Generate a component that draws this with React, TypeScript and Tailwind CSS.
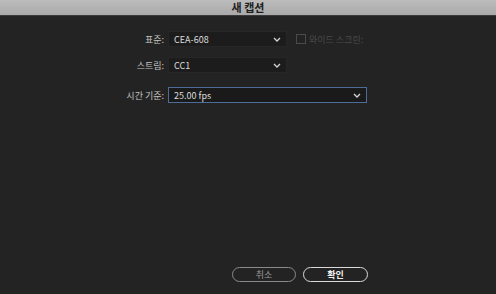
import React from "react";

const font = { fontFamily: '"Noto Sans CJK KR", "Noto Sans", sans-serif' };

function Chevron() {
  return (
    <svg width="8" height="5" viewBox="0 0 8 5" className="shrink-0">
      <path d="M1 1 L4 4 L7 1" fill="none" stroke="#d6d6d6" strokeWidth="1.3" />
    </svg>
  );
}

function Select({ value, width, focused }: { value: string; width: number; focused?: boolean }) {
  return (
    <div
      className={`ml-[4px] flex h-[16px] items-center justify-between pl-[5px] pr-[5px] ${
        focused ? "border border-[#4d6c99] bg-[#1a1a1a]" : "border border-[#262626] bg-[#1c1c1c]"
      }`}
      style={{ width }}
    >
      <span className="text-[9px] leading-none text-[#dcdcdc]">{value}</span>
      <Chevron />
    </div>
  );
}

function Label({ text }: { text: string }) {
  return <div className="w-[164px] text-right text-[9px] leading-none text-[#c2c2c2]">{text}</div>;
}

export default function App() {
  return (
    <div className="flex h-[294px] w-[496px] flex-col bg-[#232323]" style={font}>
      <div className="flex h-[16px] items-center justify-center border-b border-[#3a3a3a] bg-gradient-to-b from-[#bcbcbc] to-[#a9a9a9]">
        <span className="text-[11px] font-bold leading-none text-[#1e1e1e]">새 캡션</span>
      </div>

      <div className="mt-[15px] flex items-center">
        <Label text="표준:" />
        <Select value="CEA-608" width={119} />
        <div className="ml-[9px] flex items-center gap-[3px]">
          <div className="h-[10px] w-[10px] border border-[#4a4a4a]" />
          <span className="text-[9px] leading-none text-[#4a4a4a]">와이드 스크린:</span>
        </div>
      </div>

      <div className="mt-[10px] flex items-center">
        <Label text="스트림:" />
        <Select value="CC1" width={119} />
      </div>

      <div className="mt-[14px] flex items-center">
        <Label text="시간 기준:" />
        <Select value="25.00 fps" width={199} focused />
      </div>

      <div className="mt-auto mb-[12px] flex gap-[7px] pl-[232px]">
        <div className="flex h-[15px] w-[64px] items-center justify-center rounded-full border border-[#8a8a8a]">
          <span className="text-[9px] leading-none text-[#9a9a9a]">취소</span>
        </div>
        <div className="flex h-[15px] w-[65px] items-center justify-center rounded-full border border-[#d9d9d9]">
          <span className="text-[9px] font-bold leading-none text-[#f0f0f0]">확인</span>
        </div>
      </div>
    </div>
  );
}
